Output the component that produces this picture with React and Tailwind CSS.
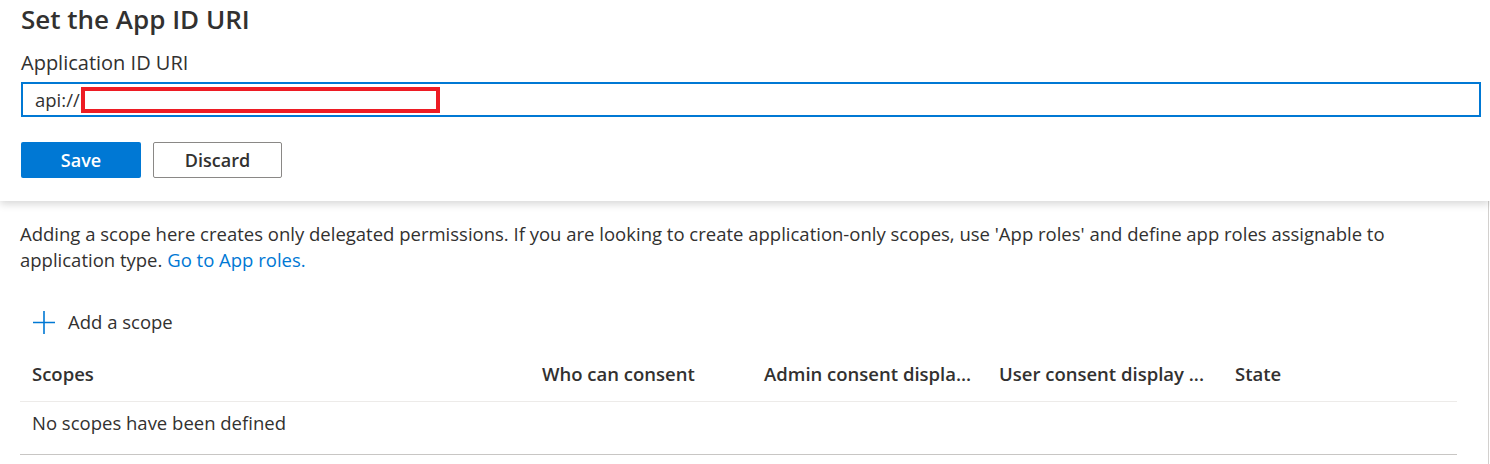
const FONT = { fontFamily: '"Segoe UI", "Open Sans", "Noto Sans", sans-serif' }

const COLUMNS = [
  { label: 'Scopes', w: 'w-[510px]' },
  { label: 'Who can consent', w: 'w-[222px]' },
  { label: 'Admin consent displa...', w: 'w-[235px]' },
  { label: 'User consent display ...', w: 'w-[236px]' },
  { label: 'State', w: 'flex-1' },
]

function PlusIcon() {
  return (
    <svg width="22" height="23" viewBox="0 0 22 23" fill="none" stroke="#0078d4" strokeWidth="1.6">
      <path d="M11 0v23M0 11.5h22" />
    </svg>
  )
}

export default function App() {
  return (
    <div className="w-[1490px] h-[464px] bg-white text-[#323130] overflow-hidden" style={FONT}>

      {/* ── Top panel ───────────────────────────────────────── */}
      <div className="relative z-10 h-[201px] bg-white pl-[21px] pr-[9px] shadow-[0_3px_8px_rgba(0,0,0,0.16)]">
        <h1 className="h-[44px] pt-[1px] text-[26px] leading-[36px] font-semibold">Set the App ID URI</h1>
        <div className="h-[38px] pt-[2px] text-[20px] leading-[34px]">Application ID URI</div>
        <div className="flex items-center h-[35px] border-2 border-[#0078d4] pl-[12px]">
          <span className="text-[18.5px] leading-[24px]">api://</span>
          <span className="ml-[1px] w-[359px] h-[26px] border-4 border-[#ed1c24]" />
        </div>
        <div className="flex gap-[12px] mt-[25px]">
          <button className="w-[120px] h-[36px] rounded-[2px] bg-[#0078d4] text-white text-[18px] font-semibold">
            Save
          </button>
          <button className="w-[129px] h-[36px] rounded-[2px] border border-[#8a8886] bg-white text-[18px] font-semibold text-[#323130]">
            Discard
          </button>
        </div>
      </div>

      {/* ── Scopes area ─────────────────────────────────────── */}
      <div className="h-[263px] mr-[1px] border-r border-[#d2d0ce] pl-[20px] pt-[20px]">
        <p className="text-[18.5px] leading-[26px]">
          Adding a scope here creates only delegated permissions. If you are looking to create application-only scopes, use 'App roles' and define app roles assignable to
          <br />
          application type. <span className="text-[#0078d4]">Go to App roles.</span>
        </p>

        <div className="flex items-center gap-[13px] mt-[34px] pl-[13px] h-[30px]">
          <PlusIcon />
          <span className="text-[18.5px]">Add a scope</span>
        </div>

        <div className="w-[1437px] mt-[15px]">
          <div className="flex h-[50px] items-center pb-[5px] border-b border-[#edebe9]">
            {COLUMNS.map(c => (
              <div key={c.label} className={`${c.w} pl-[12px] text-[18.5px] font-semibold whitespace-nowrap`}>
                {c.label}
              </div>
            ))}
          </div>
          <div className="flex h-[53px] items-center pb-[10px] border-b border-[#c8c6c4] pl-[12px] text-[18.5px]">
            No scopes have been defined
          </div>
        </div>
      </div>
    </div>
  )
}
